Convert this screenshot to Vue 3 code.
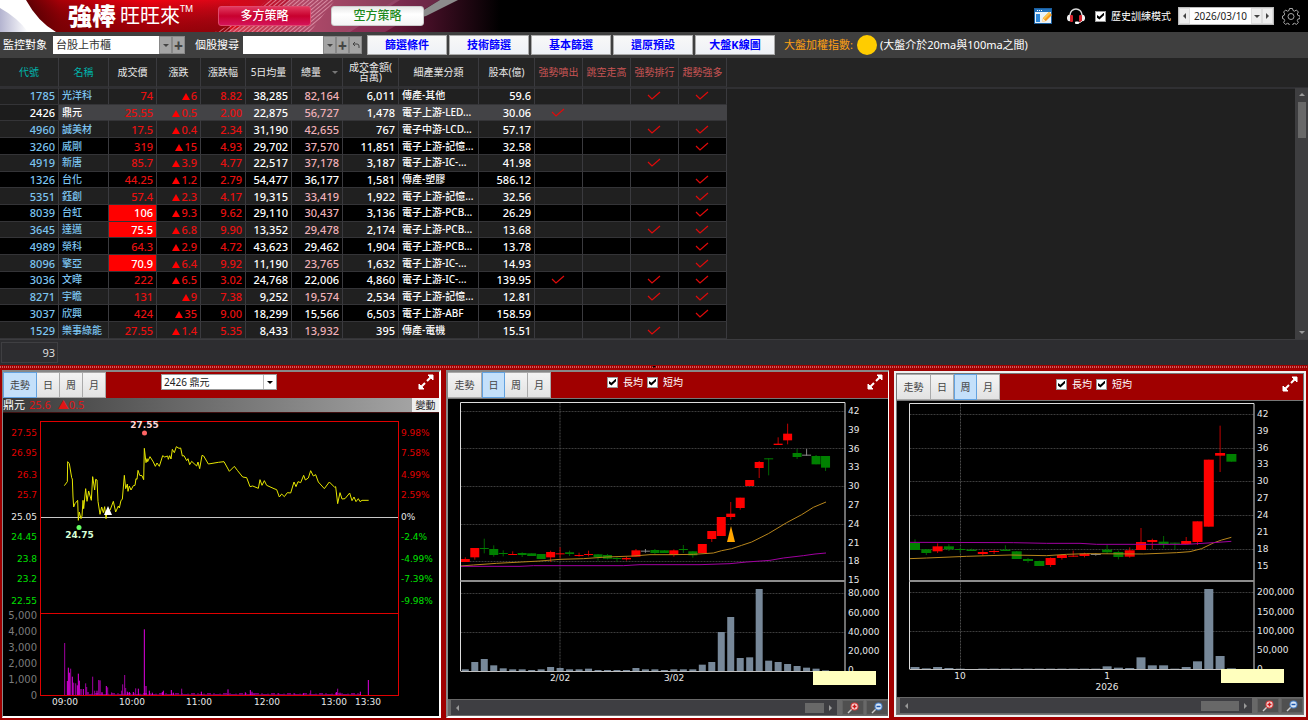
<script setup>
import { ref } from 'vue'

const columns = [
  { label: '代號', w: 59, cls: 'teal' },
  { label: '名稱', w: 50, cls: 'teal' },
  { label: '成交價', w: 48 },
  { label: '漲跌', w: 44 },
  { label: '漲跌幅', w: 45 },
  { label: '5日均量', w: 46 },
  { label: '總量', w: 51, sort: true },
  { label: '成交金額(百萬)', w: 56 },
  { label: '細產業分類', w: 80 },
  { label: '股本(億)', w: 56 },
  { label: '強勢噴出', w: 48, cls: 'rose' },
  { label: '跳空走高', w: 48, cls: 'rose' },
  { label: '強勢排行', w: 48, cls: 'rose' },
  { label: '趨勢強多', w: 48, cls: 'rose' },
]

const rows = [
  ['1785', '光洋科', '74', '6', '8.82', '38,285', '82,164', '6,011', '傳產-其他', '59.6', '0011'],
  ['2426', '鼎元', '25.55', '0.5', '2.00', '22,875', '56,727', '1,478', '電子上游-LED...', '30.06', '1000'],
  ['4960', '誠美材', '17.5', '0.4', '2.34', '31,190', '42,655', '767', '電子中游-LCD...', '57.17', '0011'],
  ['3260', '威剛', '319', '15', '4.93', '29,702', '37,570', '11,851', '電子上游-記憶...', '32.58', '0001'],
  ['4919', '新唐', '85.7', '3.9', '4.77', '22,517', '37,178', '3,187', '電子上游-IC-...', '41.98', '0010'],
  ['1326', '台化', '44.25', '1.2', '2.79', '54,477', '36,177', '1,581', '傳產-塑膠', '586.12', '0001'],
  ['5351', '鈺創', '57.4', '2.3', '4.17', '19,315', '33,419', '1,922', '電子上游-記憶...', '32.56', '0001'],
  ['8039', '台虹', '106', '9.3', '9.62', '29,110', '30,437', '3,136', '電子上游-PCB...', '26.29', '0001'],
  ['3645', '達邁', '75.5', '6.8', '9.90', '13,352', '29,478', '2,174', '電子上游-PCB...', '13.68', '0011'],
  ['4989', '榮科', '64.3', '2.9', '4.72', '43,623', '29,462', '1,904', '電子上游-PCB...', '13.78', '0001'],
  ['8096', '擎亞', '70.9', '6.4', '9.92', '11,190', '23,765', '1,632', '電子上游-IC-...', '14.93', '0001'],
  ['3036', '文曄', '222', '6.5', '3.02', '24,768', '22,006', '4,860', '電子上游-IC-...', '139.95', '1011'],
  ['8271', '宇瞻', '131', '9', '7.38', '9,252', '19,574', '2,534', '電子上游-記憶...', '12.81', '0011'],
  ['3037', '欣興', '424', '35', '9.00', '18,299', '15,566', '6,503', '電子上游-ABF', '158.59', '0001'],
  ['1529', '樂事綠能', '27.55', '1.4', '5.35', '8,433', '13,932', '395', '傳產-電機', '15.51', '0010'],
]
const limitUp = ['106', '75.5', '70.9']
const whiteTotals = ['36,177', '29,462', '22,006', '15,566']
const actions = ['篩選條件', '技術篩選', '基本篩選', '還原預設', '大盤K線圖']
const tabs = ['走勢', '日', '周', '月']
const training = ref(true)

/* intraday chart, units of a third of a pixel */
const pricePath = '193,371 202,359 203,299 208,305 215,347 217,351 219,405 221,435 225,425 233,415 235,475 238,450 243,470 246,462 249,415 251,440 257,380 261,418 266,387 274,415 278,344 284,384 287,352 291,354 294,418 300,457 305,435 310,452 314,434 318,470 323,440 330,445 340,418 347,450 355,432 358,438 363,415 367,412 373,340 377,380 382,366 384,388 388,372 393,384 400,371 405,370 408,350 411,352 414,325 419,340 426,341 431,353 433,259 438,302 441,290 443,299 450,284 460,300 466,313 471,303 478,313 488,281 494,285 503,282 505,292 509,281 513,291 517,262 523,272 529,254 537,259 542,258 547,282 552,281 560,296 564,290 569,308 575,298 590,312 594,300 599,320 606,280 611,282 625,306 655,301 672,299 688,328 703,313 712,325 728,345 740,347 750,374 758,372 775,379 780,353 786,370 793,356 800,370 822,380 830,383 838,405 845,396 853,404 862,392 872,393 882,360 888,374 894,359 902,362 911,340 916,354 925,348 932,326 940,342 947,338 955,360 973,380 988,360 1004,376 1007,374 1013,425 1020,392 1026,411 1035,410 1049,393 1056,416 1062,405 1068,419 1075,410 1080,419 1086,415 1106,415'
  .split(' ').map(p => { const [x, y] = p.split(',').map(Number); return `${x / 3},${362 + y / 3}` }).join(' ')

const leftAxis = [['27.55', 433, 'r'], ['26.95', 453, 'r'], ['26.3', 475, 'r'], ['25.7', 495, 'r'], ['25.05', 517, 'w'], ['24.45', 537, 'g'], ['23.8', 559, 'g'], ['23.2', 579, 'g'], ['22.55', 601, 'g']]
const rightAxis = [['9.98%', 433, 'r'], ['7.58%', 453, 'r'], ['4.99%', 475, 'r'], ['2.59%', 495, 'r'], ['0%', 517, 'w'], ['-2.4%', 537, 'g'], ['-4.99%', 559, 'g'], ['-7.39%', 579, 'g'], ['-9.98%', 601, 'g']]
const volAxis = [['5,000', 615], ['4,000', 631], ['3,000', 647], ['2,000', 663], ['1,000', 679], ['0', 695]]
const times = [['09:00', 65], ['10:00', 132], ['11:00', 199], ['12:00', 267], ['13:00', 334], ['13:30', 368]]

const peaks = [[194, 309], [202, 423], [205, 383], [208, 398], [212, 386], [217, 410], [221, 428], [227, 430], [232, 436], [235, 401], [238, 422], [243, 447], [250, 447], [257, 430], [260, 441], [264, 456], [278, 410], [284, 452], [291, 452], [296, 420], [300, 421], [306, 456], [319, 438], [323, 442], [335, 457], [365, 452], [368, 433], [374, 405], [377, 444], [382, 455], [388, 456], [400, 456], [407, 445], [415, 446], [433, 268], [438, 438], [448, 452], [457, 458], [487, 456], [490, 452], [514, 450], [520, 458], [545, 446], [604, 455], [684, 448], [736, 457], [751, 450], [756, 455], [762, 459], [836, 459], [884, 460], [910, 460], [932, 451], [1009, 456], [1013, 446], [1020, 458], [1081, 455], [1105, 420]]
const small = Array.from({ length: 136 }, (_, i) => [270 + i * 6, [462, 460, 463, 459, 463, 461][(i * 5 + (i >> 2)) % 6]])
const ticks = [...small, ...peaks].map(([x, y]) => ({ x: x / 3 - 0.5, y: 540 + y / 3, h: (467 - y) / 3, dim: x % 3 === 2 }))

/* candles: [colour, high, top, bottom, low] in thirds of a pixel around y = 540 */
const build = (list, vols, x0, step, cw, vw, base) => ({
  candles: list.map(([c, hi, top, bot, lo], i) => ({
    c, x: x0 + step * i, w: cw, hi: 540 + hi / 3, lo: 540 + lo / 3, top: 540 + top / 3, h: Math.max(1, (bot - top) / 3),
  })),
  vols: vols.map((v, i) => ({ x: x0 + step * i - vw / 2, w: vw, y: 540 + v / 3, h: (base - v) / 3 })),
})
const line = (pts, ox) => pts.map(([x, y]) => `${ox + x / 3},${540 + y / 3}`).join(' ')

const daily = {
  box: '448 399 440 300', left: 460.5, right: 845, top: 402.5, mid: 581, bottom: 671, vline: 560, tx: 848,
  grid: [411.5, 448.5, 486.5, 524.5, 561.5, 593.5, 632.5],
  prices: [['42', 411], ['39', 430], ['36', 449], ['33', 467], ['30', 486], ['27', 505], ['24', 524], ['21', 543], ['18', 561], ['15', 580], ['80,000', 593], ['60,000', 613], ['40,000', 632], ['20,000', 651], ['0', 670]],
  dates: [['2/02', 560, 678], ['3/02', 674, 678]],
  note: [813, 671],
  ...build([
    ['r', 52, 57, 66, 66], ['r', 24, 24, 52, 59], ['g', -4, 24, 27, 40], ['g', 16, 27, 45, 50], ['g', 31, 39, 42, 49],
    ['r', 34, 42, 45, 45], ['g', 37, 39, 45, 51], ['g', 40, 40, 48, 48], ['g', 42, 42, 57, 57], ['r', 32, 36, 52, 66],
    ['r', 22, 40, 43, 55], ['g', 32, 37, 42, 48], ['r', 38, 45, 47, 50], ['r', 32, 42, 45, 49], ['g', 42, 43, 51, 62],
    ['g', 42, 45, 56, 58], ['g', 52, 54, 57, 66], ['r', 50, 54, 58, 62], ['r', 27, 31, 50, 50], ['w', 27, 32, 34, 38],
    ['g', 27, 30, 39, 42], ['g', 30, 31, 39, 39], ['r', 28, 31, 45, 50], ['g', 15, 27, 29, 39], ['g', 33, 34, 46, 53],
    ['r', 12, 12, 39, 39], ['r', -27, -27, -3, 6], ['r', -69, -69, -12, -12], ['r', -114, -79, -69, -61], ['r', -127, -127, -96, -91],
    ['r', -180, -180, -162, -162], ['r', -237, -234, -216, -186], ['g', -245, -245, -243, -194], ['r', -308, -289, -285, -285], ['r', -349, -319, -299, -287],
    ['g', -273, -261, -249, -243], ['w', -273, -256, -253, -253], ['g', -255, -252, -227, -227], ['g', -252, -252, -217, -207],
  ], [388, 366, 357, 376, 385, 388, 388, 390, 388, 381, 384, 388, 388, 386, 390, 390, 390, 390, 384, 388, 388, 390, 388, 388, 388, 374, 366, 276, 231, 354, 352, 147, 362, 366, 372, 378, 383, 386, 391], 465.3, 9.48, 9, 7, 393),
  ma1: line([[62, 78], [100, 75], [170, 70], [245, 66], [300, 63], [360, 58], [430, 56], [500, 51], [580, 48], [630, 44], [700, 44], [760, 43], [820, 39], [845, 32], [875, 26], [905, 16], [935, 6], [985, -19], [1040, -52], [1085, -76], [1120, -98], [1158, -114]], 440),
  ma2: line([[62, 79], [240, 79], [280, 77], [550, 77], [600, 74], [780, 74], [870, 71], [920, 66], [990, 61], [1030, 54], [1090, 47], [1125, 42], [1158, 39]], 440),
  marker: true,
}
const weekly = {
  box: '897 401 406 296', left: 909.5, right: 1254, top: 403.5, mid: 581, bottom: 669, vline: 960.5, tx: 1257,
  grid: [414.5, 448.5, 481.5, 515.5, 549.5, 592.5, 631.5],
  prices: [['42', 414], ['39', 431], ['36', 448], ['33', 464], ['30', 481], ['27', 498], ['24', 515], ['21', 532], ['18', 549], ['15', 566], ['200,000', 592], ['150,000', 612], ['100,000', 631], ['50,000', 650], ['0', 669]],
  dates: [['10', 960, 676], ['1', 1107, 676], ['2026', 1107, 687]],
  note: [1221, 669],
  ...build([
    ['g', -2, 9, 30, 30], ['g', 27, 28, 39, 45], ['r', 10, 19, 34, 39], ['g', 13, 19, 28, 33], ['g', 24, 27, 29, 38],
    ['g', 26, 29, 33, 33], ['r', 28, 36, 42, 47], ['r', 29, 33, 36, 42], ['g', 16, 29, 33, 33], ['g', 33, 34, 57, 57],
    ['g', 54, 57, 63, 68], ['g', 62, 63, 78, 78], ['r', 52, 54, 75, 81], ['r', 43, 45, 54, 59], ['r', 32, 47, 49, 51],
    ['r', 38, 41, 48, 52], ['w', 40, 42, 43, 47], ['g', 15, 29, 37, 42], ['g', 32, 36, 51, 58], ['r', 22, 31, 50, 53],
    ['r', -36, 6, 30, 30], ['r', -4, 0, 6, 27], ['g', -12, 5, 12, 24], ['g', 8, 8, 11, 28], ['r', -9, 3, 12, 14],
    ['r', -56, -56, 6, 15], ['r', -241, -241, -40, -40], ['r', -343, -261, -253, -204], ['g', -258, -258, -235, -235],
  ], [381, 385, 381, 384, 386, 387, 386, 386, 386, 386, 386, 386, 386, 386, 386, 386, 386, 379, 383, 384, 352, 376, 376, 386, 381, 364, 147, 348, 385], 915, 11.3, 10, 9, 388),
  ma1: line([[88, 56], [140, 54], [260, 49], [390, 45], [500, 47], [560, 43], [620, 41], [790, 42], [890, 38], [930, 35], [965, 26], [1000, 9], [1025, 0], [1054, -8]], 880),
  ma2: line([[88, 7], [400, 8], [500, 10], [600, 10], [650, 13], [920, 13], [1000, 8], [1054, 4]], 880),
  marker: false,
}
const kPanels = [
  { id: 'day', active: 1, chart: daily, cls: 'panel-day' },
  { id: 'week', active: 2, chart: weekly, cls: 'panel-week' },
]
</script>

<template>
  <div class="app">
    <header class="banner">
      <svg class="art" viewBox="0 0 520 32" width="520" height="32" aria-hidden="true">
        <defs>
          <linearGradient id="red" x1="0" x2="1">
            <stop offset="0" stop-color="#2a0000" /><stop offset=".12" stop-color="#a80008" /><stop offset=".3" stop-color="#f00010" />
            <stop offset=".5" stop-color="#d00a1c" /><stop offset=".62" stop-color="#a02448" /><stop offset=".8" stop-color="#5e1434" />
            <stop offset="1" stop-color="#000" />
          </linearGradient>
          <linearGradient id="low" x1="0" x2="0" y1="0" y2="1">
            <stop offset="0" stop-color="#000" stop-opacity="0" /><stop offset="1" stop-color="#500" stop-opacity=".55" />
          </linearGradient>
          <linearGradient id="lav" x1="0" x2="1"><stop offset="0" stop-color="#b4b4d0" /><stop offset="1" stop-color="#fff" /></linearGradient>
          <pattern id="hatch" width="3" height="3" patternUnits="userSpaceOnUse" patternTransform="rotate(50)">
            <rect width="1" height="3" fill="#f7b7c8" opacity=".6" />
          </pattern>
        </defs>
        <rect width="500" height="32" fill="url(#red)" />
        <rect width="230" height="32" fill="url(#low)" />
        <path d="M225 32Q270 18 290 0H400L350 32Z" fill="#c08098" opacity=".4" />
        <path d="M215 32Q245 20 268 0H335L310 32Z" fill="url(#hatch)" />
        <path d="M345 32L395 0H440L385 32Z" fill="#a04a72" opacity=".45" />
        <path d="M404 22L440 0H458L426 16Z" fill="#8c8c8c" />
        <path d="M0 0H26Q38 22 56 32H0Z" fill="#fff" />
        <path d="M0 8Q18 18 28 32H0Z" fill="url(#lav)" />
      </svg>
      <h1 class="brand"><strong>強棒</strong><span>旺旺來</span><sup>TM</sup></h1>
      <nav class="modes">
        <button type="button" class="mode long">多方策略</button>
        <button type="button" class="mode short">空方策略</button>
      </nav>
      <div class="tools">
        <button type="button" class="icon" aria-label="自訂版面">
          <svg viewBox="0 0 18 16" width="18" height="16"><rect x=".5" y=".5" width="17" height="15" fill="#e8f2fb" stroke="#1b5f9f" /><rect x="1" y="1" width="16" height="3" fill="#2372bd" /><path d="M3 2.5h1M5 2.5h1M7 2.5h1" stroke="#fff" /><rect x="2" y="6" width="4" height="8" fill="#2b86d9" /><path d="M8 14l1-4 6-6 3 3-6 6z" fill="#f7981d" /><path d="M9 10l6-6 1.5 1.5-6 6z" fill="#fdc54d" /><path d="M8 14l1-3.500 2.500 2.500z" fill="#fff0cf" /></svg>
        </button>
        <button type="button" class="icon headset" aria-label="客服">
          <svg viewBox="0 0 18 16" width="18" height="16"><path d="M3 8V7a6 6 0 0 1 12 0v1" fill="none" stroke="#d8d8d8" stroke-width="1.500" /><path d="M0 9q1-3 3-2v6q-2 1-3-2zM18 9q-1-3-3-2v6q2 1 3-2z" fill="#eee" /><rect x="3" y="7" width="3" height="7" rx="1" fill="#d9242e" /><rect x="12" y="7" width="3" height="7" rx="1" fill="#d9242e" /><path d="M15 13q-1 2-5 2" fill="none" stroke="#ddd" /><rect x="8" y="13.500" width="4" height="2.500" rx="1" fill="#fff" /></svg>
        </button>
        <label class="check"><input v-model="training" type="checkbox"><span>歷史訓練模式</span></label>
        <div class="date">
          <button type="button" class="step" aria-label="前一日"><i class="tri left"></i></button>
          <input type="text" value="2026/03/10" aria-label="日期">
          <button type="button" class="step" aria-label="選擇日期"><i class="tri down"></i></button>
          <button type="button" class="step" aria-label="後一日"><i class="tri right"></i></button>
        </div>
        <button type="button" class="icon" aria-label="設定">
          <svg viewBox="0 0 18 18" width="18" height="18" fill="none" stroke="#a8a8a8"><path d="M7.500 1.500h3l.5 2 1.500.7 1.900-1.200 2 2-1.100 1.900.6 1.500 2.100.6v2.500l-2.100.6-.6 1.500 1.100 1.900-2 1.900-1.900-1.100-1.500.6-.5 2h-3l-.5-2-1.500-.6-1.900 1.100-2-1.900 1.100-1.900-.6-1.500-1.600-.6V9l1.600-.6.6-1.500L1.600 5l2-2 1.900 1.200L7 3.500z" /><circle cx="9" cy="9.500" r="3" /></svg>
        </button>
      </div>
    </header>

    <div class="toolbar">
      <label class="cap" for="watch">監控對象</label>
      <div class="combo watch">
        <select id="watch"><option>台股上市櫃</option></select>
        <span class="drop"><i class="tri down"></i></span>
        <button type="button" aria-label="新增監控">✚</button>
      </div>
      <label class="cap" for="find">個股搜尋</label>
      <div class="combo find">
        <input id="find" type="text">
        <button type="button" aria-label="展開"><i class="tri down"></i></button>
        <button type="button" aria-label="新增個股">✚</button>
        <button type="button" aria-label="返回"><svg viewBox="0 0 8 8" width="8" height="8"><path d="M3 1L1 3l2 2M1 3h4q2 0 2 2v2" fill="none" stroke="#444" /></svg></button>
      </div>
      <div class="actions"><button v-for="a in actions" :key="a" type="button">{{ a }}</button></div>
      <p class="index"><span>大盤加權指數:</span><i class="lamp"></i><b>(大盤介於20ma與100ma之間)</b></p>
    </div>

    <section class="list">
      <div class="grid-area">
        <table>
          <colgroup><col v-for="(c, i) in columns" :key="i" :class="'c' + c.w"></colgroup>
          <thead>
            <tr>
              <th v-for="c in columns" :key="c.label" scope="col" :class="c.cls">
                <span v-if="c.label === '成交金額(百萬)'">成交金額(<br>百萬)</span>
                <span v-else :class="{ sorted: c.sort }">{{ c.label }}<i v-if="c.sort" class="tri down"></i></span>
              </th>
            </tr>
          </thead>
          <tbody>
            <tr v-for="(r, i) in rows" :key="r[0]" :class="{ sel: i === 1 }">
              <td class="blue">{{ r[0] }}</td>
              <td class="txt blue">{{ r[1] }}</td>
              <td class="up" :class="{ limit: limitUp.includes(r[2]) }">{{ r[2] }}</td>
              <td class="up"><i class="rise"></i>{{ r[3] }}</td>
              <td class="up">{{ r[4] }}</td>
              <td>{{ r[5] }}</td>
              <td :class="{ pink: !whiteTotals.includes(r[6]) }">{{ r[6] }}</td>
              <td>{{ r[7] }}</td>
              <td class="txt">{{ r[8] }}</td>
              <td>{{ r[9] }}</td>
              <td v-for="k in 4" :key="k" class="flag">
                <svg v-if="r[10][k - 1] === '1'" viewBox="0 0 14 9" width="14" height="9" role="img" aria-label="符合"><path d="M1 4l4 4 8-7" fill="none" stroke="#e00a0a" stroke-width="1.200" /></svg>
              </td>
            </tr>
          </tbody>
        </table>
        <div class="vscroll"><i class="tri up"></i><span class="thumb"></span><i class="tri down"></i></div>
      </div>
      <div class="summary"><output>93</output></div>
    </section>

    <div class="splitter"><i class="tri down"></i></div>

    <main class="charts">
      <section class="panel panel-trend">
        <div class="head">
          <div class="tabs"><button v-for="(t, i) in tabs" :key="t" type="button" :class="{ on: i === 0 }">{{ t }}</button></div>
          <div class="pick">
            <select aria-label="個股"><option>2426 鼎元</option></select><span class="drop"><i class="tri down"></i></span>
          </div>
          <button type="button" class="expand" aria-label="放大"><svg viewBox="0 0 16 16" width="16" height="16"><path d="M10 1h5v5zM6 15H1v-5z" fill="#fff" stroke="#fff" /><path d="M13 3L9 7M7 9l-4 4" stroke="#fff" stroke-width="2" /></svg></button>
        </div>
        <div class="quote"><span>鼎元</span><b>25.6</b><b>▲0.5</b><button type="button">變動</button></div>
        <svg class="chart" viewBox="3 413 436 303" role="img" aria-label="走勢圖">
          <rect x="40.500" y="421.500" width="358" height="274" fill="none" stroke="#e00000" />
          <path d="M40 613.500H398" stroke="#e00000" />
          <path d="M41 517.500H398" stroke="#c8c8c8" />
          <rect v-for="(t, i) in ticks" :key="i" :x="t.x" :y="t.y" width="1" :height="t.h" :fill="t.dim ? '#a000a0' : '#e000e0'" />
          <path d="M41 695.500H398" stroke="#e00000" />
          <polyline :points="pricePath" fill="none" stroke="#e6e600" />
          <path d="M108 506l4 9h-8z" fill="#fff" />
          <circle cx="144.500" cy="433" r="2.500" fill="#ff6464" /><circle cx="79" cy="527.500" r="2.500" fill="#64ff64" />
          <text class="peak" x="144.500" y="428" fill="#ffd8d8">27.55</text>
          <text class="peak" x="79.500" y="538" fill="#d8ffd8">24.75</text>
          <text v-for="a in leftAxis" :key="a[0]" x="37" :y="a[1] + 3" text-anchor="end" :class="a[2]">{{ a[0] }}</text>
          <text v-for="a in rightAxis" :key="a[0]" x="401" :y="a[1] + 3" :class="a[2]">{{ a[0] }}</text>
          <text v-for="a in volAxis" :key="a[0]" class="vol" x="37" :y="a[1] + 4" text-anchor="end">{{ a[0] }}</text>
          <text v-for="a in times" :key="a[0]" :x="a[1]" y="705" text-anchor="middle" class="w">{{ a[0] }}</text>
        </svg>
      </section>

      <section v-for="p in kPanels" :key="p.id" class="panel" :class="p.cls">
        <div class="head">
          <div class="tabs"><button v-for="(t, i) in tabs" :key="t" type="button" :class="{ on: i === p.active }">{{ t }}</button></div>
          <div class="averages">
            <label class="check"><input type="checkbox" checked><span>長均</span></label>
            <label class="check"><input type="checkbox" checked><span>短均</span></label>
          </div>
          <button type="button" class="expand" aria-label="放大"><svg viewBox="0 0 16 16" width="16" height="16"><path d="M10 1h5v5zM6 15H1v-5z" fill="#fff" stroke="#fff" /><path d="M13 3L9 7M7 9l-4 4" stroke="#fff" stroke-width="2" /></svg></button>
        </div>
        <svg class="chart ruled" :viewBox="p.chart.box" role="img" aria-label="K線圖">
          <path v-for="y in p.chart.grid" :key="y" :d="`M${p.chart.left} ${y}H${p.chart.right}`" stroke="#3c3c3c" stroke-dasharray="2 1" />
          <path :d="`M${p.chart.vline} ${p.chart.top}V${p.chart.bottom}`" stroke="#4a4a4a" stroke-dasharray="2 1" />
          <rect v-for="(v, i) in p.chart.vols" :key="'v' + i" :x="v.x" :y="v.y" :width="v.w" :height="v.h" fill="#778899" />
          <g v-for="(c, i) in p.chart.candles" :key="'c' + i" :class="'k-' + c.c">
            <rect class="wick" :x="c.x - 0.5" :y="c.hi" width="1" :height="c.lo - c.hi" />
            <rect :x="c.x - c.w / 2" :y="c.top" :width="c.w" :height="c.h" />
          </g>
          <polyline :points="p.chart.ma1" fill="none" stroke="#b8861c" />
          <polyline :points="p.chart.ma2" fill="none" stroke="#a000a0" />
          <path v-if="p.chart.marker" d="M731 526l4 16h-8z" fill="#ffa500" />
          <path :d="`M${p.chart.left} ${p.chart.bottom}V${p.chart.top}H${p.chart.right}V${p.chart.bottom}`" fill="none" stroke="#dcdcdc" />
          <path :d="`M${p.chart.left} ${p.chart.mid}H${p.chart.right}`" stroke="#8c8c8c" stroke-width="2" />
          <path :d="`M${p.chart.left} ${p.chart.bottom + 0.5}H${p.chart.right}`" stroke="#c0c0c0" />
          <text v-for="a in p.chart.prices" :key="a[0]" :x="p.chart.tx" :y="a[1] + 3" class="w">{{ a[0] }}</text>
          <text v-for="a in p.chart.dates" :key="a[0]" :x="a[1]" :y="a[2] + 3" text-anchor="middle" class="w">{{ a[0] }}</text>
          <rect :x="p.chart.note[0]" :y="p.chart.note[1]" width="63" height="14" fill="#ffffbe" />
        </svg>
        <div class="hscroll">
          <div class="track"><i class="tri left"></i><span class="thumb"></span><i class="tri right"></i></div>
          <button type="button" aria-label="放大比例"><svg viewBox="0 0 12 12" width="12" height="12"><path d="M1 11l4-4" stroke="#ccc" stroke-width="1.500" /><circle cx="7.500" cy="4.500" r="4" fill="#d83a3a" /><circle cx="7.500" cy="4.500" r="3" fill="#f3dede" /><path d="M5.500 4.500h4M7.500 2.500v4" stroke="#d01818" stroke-width="1.500" /></svg></button>
          <button type="button" aria-label="縮小比例"><svg viewBox="0 0 12 12" width="12" height="12"><path d="M1 11l4-4" stroke="#ccc" stroke-width="1.500" /><circle cx="7.500" cy="4.500" r="4" fill="#4a80c8" /><circle cx="7.500" cy="4.500" r="3" fill="#dbe8f6" /><path d="M5.500 4.500h4" stroke="#1c58b0" stroke-width="1.500" /></svg></button>
        </div>
      </section>
    </main>
  </div>
</template>

<style>
body { margin: 0; background: #a00000; }
</style>

<style scoped>
.app { min-height: 100vh; display: flex; flex-direction: column; background: #a00000; color: #fff; font: 11px/16px "Noto Sans", "Noto Sans CJK TC", sans-serif; }
.app *, .app *::before { box-sizing: border-box; }
button, input, select { font: inherit; margin: 0; padding: 0; border: 0; border-radius: 0; }
select { appearance: none; }
p { margin: 0; }
.tri { width: 0; height: 0; border: 3px solid transparent; flex: none; }
.tri.down { border-top-color: #444; border-bottom: 0; }
.tri.up { border-bottom-color: #999; border-top: 0; }
.tri.left { border-right-color: #444; border-left: 0; }
.tri.right { border-left-color: #444; border-right: 0; }

.banner { position: relative; height: 32px; display: flex; align-items: center; background: #000; }
.art { position: absolute; left: 0; top: 0; }
.brand { position: relative; margin: 0 0 0 68px; width: 150px; display: flex; align-items: center; font-size: 20px; line-height: 30px; font-weight: 400; white-space: nowrap; }
.brand strong { font-size: 24px; font-weight: 900; margin-right: 4px; }
.brand sup { align-self: flex-start; font-size: 9px; line-height: 16px; }
.modes { position: relative; display: flex; gap: 20px; }
.mode { width: 93px; height: 20px; border-radius: 3px; font-size: 12px; line-height: 16px; color: #fff; border: 1px solid #e0486c; background: linear-gradient(#e2385e, #c8002e 50%, #d4145a); font-weight: 500; }
.mode.short { color: #1e8a1e; border-color: #ccc; background: linear-gradient(#e8e8e8, #fff 40%, #f4f4f4); }
.tools { margin-left: auto; padding-right: 8px; display: flex; align-items: center; }
.icon { background: none; display: flex; }
.headset { margin: 0 10px 0 15px; }
.check { display: flex; align-items: center; gap: 5px; font-size: 10px; line-height: 12px; }
.check input { appearance: none; width: 11px; height: 11px; background: #fff; border: 1px solid #999; display: grid; }
.check input:checked::before { content: ""; margin: 1px; background: #000; clip-path: polygon(0 35%, 35% 60%, 100% 0, 100% 40%, 35% 100%, 0 75%); }
.date { margin: 0 8px 0 7px; display: flex; width: 96px; height: 18px; background: #fff; border: 1px solid #bbb; }
.date input { flex: 1; min-width: 0; font-size: 10px; color: #222; background: #fff; text-align: center; }
.step { width: 11px; background: #eee; border: 1px solid #ddd; display: grid; place-items: center; }

.toolbar { height: 26px; padding: 0 3px; display: flex; align-items: center; background: #3f3f3f; white-space: nowrap; }
.combo { display: flex; height: 18px; background: #fff; margin: 0 10px 0 6px; }
.combo.watch { width: 132px; }
.combo.find { width: 119px; margin: 0 5px 0 4px; }
.combo select, .combo input { flex: 1; min-width: 0; padding: 0 3px; background: #fff; color: #333; }
.combo button, .drop { width: 13px; border: 1px solid #888; background: #a4a4a4; color: #444; font-size: 9px; line-height: 9px; display: grid; place-items: center; }
.drop { pointer-events: none; }
.actions { display: flex; gap: 2px; }
.actions button { width: 80px; height: 20px; border: 1px solid #aaa; background: linear-gradient(#f8f8f8, #eef1f6); color: #00f; font-weight: 700; line-height: 16px; }
.index { display: flex; align-items: center; margin-left: 9px; line-height: 24px; }
.index span { color: #ffa012; }
.index b { font-weight: 400; }
.lamp { width: 20px; height: 20px; border-radius: 50%; background: #ffcc00; margin: 0 3px 0 4px; }

.list { background: #202020; }
.grid-area { position: relative; height: 282px; background: linear-gradient(#242424 29px, #303033 29px, #303033 31px, #202020 31px); border-bottom: 1px solid #3c3c3f; overflow: hidden; }
table { table-layout: fixed; width: 727px; height: 281px; border-collapse: separate; border-spacing: 0; }
.c59 { width: 59px; } .c50 { width: 50px; } .c48 { width: 48px; } .c44 { width: 44px; } .c45 { width: 45px; } .c46 { width: 46px; } .c51 { width: 51px; } .c56 { width: 56px; } .c80 { width: 80px; }
th { height: 30px; padding: 0; border-right: 1px solid #3a3a3e; border-bottom: 2px solid #303033; font-size: 10px; line-height: 10px; font-weight: 400; color: #e8e8e8; }
th span { display: block; white-space: nowrap; }
th .sorted { display: flex; align-items: center; justify-content: flex-end; gap: 11px; padding-right: 4px; }
th .tri.down { border-top-color: #777; }
th.teal { color: #00b4ac; }
th.rose { color: #c85454; }
td { height: 16px; padding: 0 3px 0 0; border-right: 1px solid #3a3a3e; border-bottom: 1px solid #343437; line-height: 15px; font-weight: 500; text-align: right; white-space: nowrap; overflow: hidden; }
tbody tr:nth-child(even) { background: #000; }
tbody tr.sel { background: #434346; }
.sel td { border-right-color: #434346; }
.sel td:first-child { background: #1c1c1c; border-right-color: #3a3a3e; }
.txt { text-align: left; padding: 0 0 0 3px; font-size: 10px; }
.blue { color: #7cc4f0; }
.sel .blue { color: #fff; }
.up { color: #e81010; }
.limit { background: #f00; color: #fff; }
.pink { color: #f0b0b8; }
.flag { padding: 0 2px 0 0; text-align: center; line-height: 0; }
.rise { display: inline-block; border: 4px solid transparent; border-top: 0; border-bottom: 7px solid #f00; margin-right: 1px; }
.vscroll { position: absolute; right: 0; top: 30px; bottom: 0; width: 13px; background: #3e3e40; display: flex; flex-direction: column; align-items: center; padding: 5px 0; }
.vscroll .thumb { width: 8px; height: 36px; margin: 6px 0 auto; background: #686868; }
.vscroll .tri.down { border-top-color: #999; }
.summary { height: 25px; padding: 2px 0 0 1px; background: #2d2d30; }
.summary output { display: block; width: 57px; height: 21px; padding-right: 2px; border: 1px solid #3f3f42; text-align: right; line-height: 19px; font-size: 11px; color: #ddd; }

.splitter { height: 5px; padding-top: 1px; display: flex; justify-content: center; background: repeating-linear-gradient(90deg, #c86060 0 1px, #a00000 1px 2px) 0 1px / 100% 2px no-repeat #a00000; }
.splitter .tri.down { border-width: 2px; border-bottom: 0; border-top-color: #000; }
.charts { display: grid; grid-template-columns: 439fr 443fr 412fr; gap: 5px; padding: 0 2px 2px; align-items: start; background: #a00000; }
.panel { min-width: 0; background: #000; display: flex; flex-direction: column; }
.panel-trend { border: solid; border-width: 2px 2px 2px 1px; border-color: #888 #fff #fff #888; }
.panel-day { border: solid; border-width: 2px 1px 2px 2px; border-color: #888 #fff #fff #888; }
.panel-week { margin-top: 1px; border: 2px solid #f0f0f0; outline: 1px solid #777; outline-offset: -3px; padding: 1px; }
.head { display: flex; align-items: flex-start; height: 26px; background: #a00000; }
.tabs { display: flex; height: 26px; }
.tabs button { width: 23px; border: 1px solid #aaa; border-width: 1px 1px 1px 0; background: linear-gradient(#f4f4f4, #e2e2e2); color: #444; font-size: 10px; }
.tabs button:first-child { width: 34px; }
.tabs button.on { background: #c4e0fa; border: 1px solid #62a2e0; }
.pick { display: flex; width: 116px; height: 16px; margin: 2px 0 0 55px; background: #fff; border: 1px solid #999; }
.pick select { flex: 1; background: #fff; color: #222; font-size: 10px; line-height: 14px; padding: 0 2px; }
.pick .drop { background: #fff; border: 0; border-left: 1px solid #bbb; }
.pick .drop .tri { border-top-color: #000; }
.averages { display: flex; gap: 4px; margin: 4px 0 0 56px; }
.expand { margin: 2px 5px 0 auto; background: none; display: flex; }
.quote { display: flex; align-items: center; gap: 4px; height: 15px; background: linear-gradient(90deg, #3a3a3a, #aaa); font-size: 11px; line-height: 14px; border-bottom: 1px solid #401010; }
.quote b { font-weight: 400; color: #e01414; margin-right: 3px; }
.quote button { width: 27px; height: 14px; margin-left: auto; background: #eee; color: #222; font-size: 10px; line-height: 13px; }
.chart { display: block; width: 100%; height: auto; font: 9px "DejaVu Sans", sans-serif; }
.ruled { border-top: 1px solid #777; }
.chart .r { fill: #e00000; } .chart .g { fill: #00e000; } .chart .w { fill: #e8e8e8; }
.chart .vol { font-size: 10px; fill: #7c7c7c; }
.chart .peak { font-weight: 700; text-anchor: middle; }
.k-r { fill: #f00; } .k-g { fill: #008000; } .k-w { fill: #888; }
.k-r .wick { fill: #c00000; } .k-g .wick { fill: #006400; }
.hscroll { height: 17px; display: flex; gap: 2px; padding: 1px 0 1px 3px; background: #686868; }
.track { flex: 1; margin-right: 3px; padding: 0 5px; display: flex; align-items: center; background: #3e3e42; }
.track .thumb { width: 19px; height: 10px; margin: 0 5px 0 auto; background: #686868; }
.panel-week .thumb { width: 38px; }
.track .tri.left { border-right-color: #999; }
.track .tri.right { border-left-color: #999; }
.hscroll button { width: 22px; background: #505050; border: 1px solid #606060; display: grid; place-items: center; }
</style>
